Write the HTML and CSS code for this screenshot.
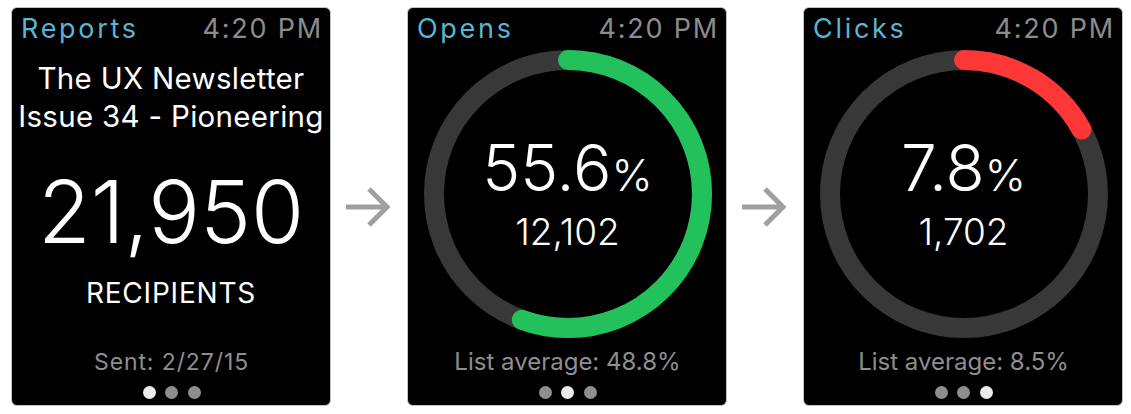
FILE: index.html
```html
<!DOCTYPE html>
<html lang="en">
  <head>
    <meta charset="UTF-8" />
    <meta name="viewport" content="width=device-width, initial-scale=1.0" />
    <title>Newsletter Reports</title>
    <link rel="stylesheet" href="styles.css">
  </head>
  <body>
    <main class="flow">
      <!-- Screen 1: report summary -->
      <section class="watch">
        <header class="watch-bar">
          <span class="watch-app">Reports</span>
          <span class="watch-time">4:20 PM</span>
        </header>
        <div class="summary">
          <h1 class="summary-title">The UX Newsletter<br />Issue 34 - Pioneering</h1>
          <p class="summary-count">21,950</p>
          <p class="summary-label">RECIPIENTS</p>
        </div>
        <footer class="watch-foot">
          <p class="watch-note watch-note--sent">Sent: 2/27/15</p>
          <div class="dots">
            <span class="dot is-active"></span><span class="dot"></span><span class="dot"></span>
          </div>
        </footer>
      </section>

      <div class="step">
        <svg class="step-arrow" viewBox="0 0 48 44" width="48" height="44">
          <path d="M1 22 H42 M24 4 L42 22 L24 40" />
        </svg>
      </div>

      <!-- Screen 2: opens -->
      <section class="watch">
        <header class="watch-bar">
          <span class="watch-app">Opens</span>
          <span class="watch-time">4:20 PM</span>
        </header>
        <div class="gauge">
          <svg class="gauge-ring" viewBox="0 0 288 288" width="288" height="288">
            <circle class="gauge-track" cx="144" cy="144" r="134" />
            <circle class="gauge-meter gauge-meter--open" cx="144" cy="144" r="134"
              pathLength="100" stroke-dasharray="55.6 100" transform="rotate(-90 144 144)" />
          </svg>
          <div class="gauge-text">
            <p class="gauge-rate">55.6<small>%</small></p>
            <p class="gauge-count">12,102</p>
          </div>
        </div>
        <footer class="watch-foot">
          <p class="watch-note">List average: 48.8%</p>
          <div class="dots">
            <span class="dot"></span><span class="dot is-active"></span><span class="dot"></span>
          </div>
        </footer>
      </section>

      <div class="step">
        <svg class="step-arrow" viewBox="0 0 48 44" width="48" height="44">
          <path d="M1 22 H42 M24 4 L42 22 L24 40" />
        </svg>
      </div>

      <!-- Screen 3: clicks -->
      <section class="watch">
        <header class="watch-bar">
          <span class="watch-app">Clicks</span>
          <span class="watch-time">4:20 PM</span>
        </header>
        <div class="gauge">
          <svg class="gauge-ring" viewBox="0 0 288 288" width="288" height="288">
            <circle class="gauge-track" cx="144" cy="144" r="134" />
            <circle class="gauge-meter gauge-meter--click" cx="144" cy="144" r="134"
              pathLength="100" stroke-dasharray="17 100" transform="rotate(-90 144 144)" />
          </svg>
          <div class="gauge-text">
            <p class="gauge-rate">7.8<small>%</small></p>
            <p class="gauge-count">1,702</p>
          </div>
        </div>
        <footer class="watch-foot">
          <p class="watch-note">List average: 8.5%</p>
          <div class="dots">
            <span class="dot"></span><span class="dot"></span><span class="dot is-active"></span>
          </div>
        </footer>
      </section>
    </main>
  </body>
</html>
```

FILE: styles.css
```css
body {
  margin: 0;
  background: #fff;
  font-family: Inter, "Noto Sans", sans-serif;
  color: #fff;
}

p,
h1 {
  margin: 0;
}

.flow {
  display: flex;
  padding: 7px 0 0 11px;
}

/* watch screen */
.watch {
  width: 320px;
  height: 399px;
  box-sizing: border-box;
  border: 1px solid #c4c4c4;
  border-radius: 6px;
  background: #000;
  padding: 6px 8px 0 9px;
  display: flex;
  flex-direction: column;
}

.watch-bar {
  display: flex;
  justify-content: space-between;
  font-size: 27px;
  line-height: 30px;
}

.watch-app {
  color: #5ab5d5;
  letter-spacing: 2.7px;
}

.watch-time {
  color: #8c8c8c;
  letter-spacing: 1.8px;
  margin-right: -1px;
}

.watch-foot {
  margin-top: auto;
  padding-bottom: 6px;
  text-align: center;
}

.watch-note {
  font-size: 24px;
  line-height: 28px;
  color: #8e8e8e;
}

.watch-note--sent {
  font-size: 23px;
  letter-spacing: 0.9px;
}

.dots {
  display: flex;
  justify-content: center;
  gap: 9.5px;
  margin-top: 10px;
}

.dot {
  width: 13px;
  height: 13px;
  border-radius: 50%;
  background: #8e8e8e;
}

.dot.is-active {
  background: #ececec;
}

/* screen 1 */
.summary {
  margin: 0 -8px 0 -9px;
  padding-top: 15px;
  text-align: center;
  white-space: nowrap;
}

.summary-title {
  font-size: 29.5px;
  line-height: 38px;
  font-weight: 400;
  letter-spacing: 0.3px;
}

.summary-count {
  margin-top: 34px;
  font-size: 86px;
  line-height: 86px;
  font-weight: 300;
}

.summary-label {
  margin-top: 22px;
  font-size: 28px;
  line-height: 32px;
  letter-spacing: 0.8px;
}

/* ring gauge */
.gauge {
  display: grid;
  justify-content: center;
  margin-top: 6px;
}

.gauge > * {
  grid-area: 1 / 1;
}

.gauge-ring {
  display: block;
}

.gauge-track,
.gauge-meter {
  fill: none;
  stroke-width: 20;
}

.gauge-track {
  stroke: #383838;
}

.gauge-meter {
  stroke-linecap: round;
}

.gauge-meter--open {
  stroke: #22c15c;
}

.gauge-meter--click {
  stroke: #fd3636;
}

.gauge-text {
  padding-top: 86px;
  text-align: center;
}

.gauge-rate {
  font-size: 64px;
  line-height: 64px;
  font-weight: 300;
}

.gauge-rate small {
  font-size: 44px;
}

.gauge-count {
  margin-top: 5px;
  font-size: 37px;
  line-height: 40px;
  font-weight: 300;
}

/* arrows between screens */
.step {
  width: 76px;
  display: flex;
  align-items: center;
  justify-content: center;
}

.step-arrow path {
  fill: none;
  stroke: #a0a0a0;
  stroke-width: 5;
}
```
